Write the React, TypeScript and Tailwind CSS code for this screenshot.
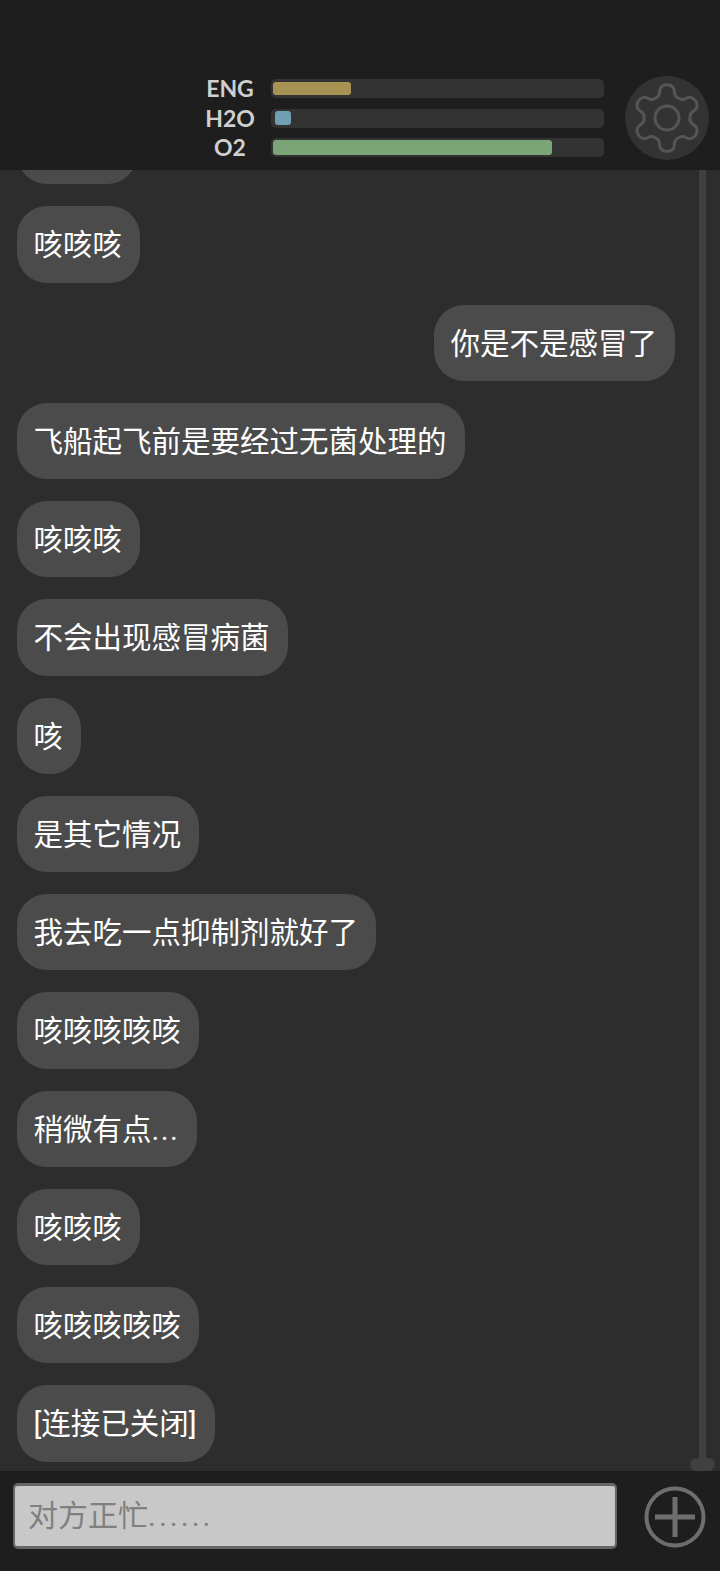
import React from 'react';

type Message = { text: string; dots?: boolean; mine?: boolean };

const messages: Message[] = [
  { text: '咳咳咳' },
  { text: '你是不是感冒了', mine: true },
  { text: '飞船起飞前是要经过无菌处理的' },
  { text: '咳咳咳' },
  { text: '不会出现感冒病菌' },
  { text: '咳' },
  { text: '是其它情况' },
  { text: '我去吃一点抑制剂就好了' },
  { text: '咳咳咳咳咳' },
  { text: '稍微有点', dots: true },
  { text: '咳咳咳' },
  { text: '咳咳咳咳咳' },
  { text: '[连接已关闭]' },
];

const stats = [
  { label: 'ENG', fill: 'w-[78px] ml-[1px] h-[13px] bg-[#a89253]' },
  { label: 'H2O', fill: 'w-[16px] ml-[3px] h-[14px] bg-[#6fa0b4]' },
  { label: 'O2', fill: 'w-[279px] ml-[1px] h-[15px] bg-[#7ba577]' },
];

function GearIcon() {
  return (
    <svg className="w-[80px] h-[80px]" viewBox="0 0 24 24" fill="none" stroke="#555555" strokeWidth={0.9} strokeLinejoin="round">
      <path d="M12.22 2h-.44a2 2 0 0 0-2 2v.18a2 2 0 0 1-1 1.73l-.43.25a2 2 0 0 1-2 0l-.15-.08a2 2 0 0 0-2.73.73l-.22.38a2 2 0 0 0 .73 2.73l.15.1a2 2 0 0 1 1 1.72v.51a2 2 0 0 1-1 1.74l-.15.09a2 2 0 0 0-.73 2.73l.22.38a2 2 0 0 0 2.73.73l.15-.08a2 2 0 0 1 2 0l.43.25a2 2 0 0 1 1 1.73V20a2 2 0 0 0 2 2h.44a2 2 0 0 0 2-2v-.18a2 2 0 0 1 1-1.73l.43-.25a2 2 0 0 1 2 0l.15.08a2 2 0 0 0 2.73-.73l.22-.39a2 2 0 0 0-.73-2.73l-.15-.08a2 2 0 0 1-1-1.74v-.5a2 2 0 0 1 1-1.74l.15-.09a2 2 0 0 0 .73-2.73l-.22-.38a2 2 0 0 0-2.73-.73l-.15.08a2 2 0 0 1-2 0l-.43-.25a2 2 0 0 1-1-1.73V4a2 2 0 0 0-2-2z" />
      <circle cx="12" cy="12" r="3.6" />
    </svg>
  );
}

function PlusIcon() {
  return (
    <svg className="w-[62px] h-[62px]" viewBox="0 0 62 62" fill="none" stroke="#6e6e6e">
      <circle cx="31" cy="31" r="28.5" strokeWidth={4} />
      <path d="M11 31h40M31 11v40" strokeWidth={5} />
    </svg>
  );
}

export default function App() {
  return (
    <div className="flex flex-col h-[1571px] w-[720px] bg-[#2d2d2d] overflow-hidden font-['Roboto','Noto_Sans_CJK_SC',sans-serif]">
      <header className="h-[170px] shrink-0 bg-[#1e1e1e] flex justify-end items-start pt-[76px] pr-[11px] z-10">
        <div className="flex flex-col gap-[10px] pt-[3px] mr-[21px]">
          {stats.map((s) => (
            <div key={s.label} className="flex items-center h-[19.5px]">
              <span className="w-[64px] mr-[9px] text-center text-[23px] leading-none font-bold text-[#cfcfcf] font-['Lato',sans-serif]">
                {s.label}
              </span>
              <div className="w-[333px] h-[19px] rounded-[5px] bg-[#333333] flex items-center px-[1px]">
                <div className={`rounded-[3px] ${s.fill}`} />
              </div>
            </div>
          ))}
        </div>
        <button className="w-[84px] h-[84px] rounded-full bg-[#333333] flex items-center justify-center">
          <GearIcon />
        </button>
      </header>

      <main className="flex-1 relative overflow-hidden">
        <div className="flex flex-col gap-[22px] mt-[-62px] pl-[17px] pr-[45px]">
          {/* top bubble is scrolled under the header, only its bottom edge shows */}
          <div className="w-[120px] h-[76.25px] rounded-[30px] bg-[#4b4b4b]" />
          {messages.map((m, i) => (
            <div key={i} className={`flex ${m.mine ? 'justify-end' : 'justify-start'}`}>
              <div className="h-[76.25px] pl-[16.5px] pr-[18px] rounded-[30px] bg-[#4b4b4b] text-white text-[29.5px] leading-[78px] whitespace-nowrap">
                {m.text}
                {m.dots && <span className="tracking-[1.5px]">...</span>}
              </div>
            </div>
          ))}
        </div>
        <div className="absolute top-0 right-[14px] w-[7px] h-[1292px] bg-[#404040]" />
        <div className="absolute bottom-0 right-[5px] w-[25px] h-[13px] rounded-full bg-[#404040]" />
      </main>

      <footer className="h-[100px] shrink-0 bg-[#1e1e1e] flex items-start pt-[12px] pl-[13px]">
        <div className="w-[604px] h-[66px] rounded-[5px] bg-[#c8c8c8] border-x-2 border-y-[3px] border-[#666666] flex items-center px-[13px]">
          <span className="text-[30px] leading-none text-[#808080]">
            对方正忙<span className="tracking-[3px]">......</span>
          </span>
        </div>
        <button className="ml-[27px] mt-[3px]">
          <PlusIcon />
        </button>
      </footer>
    </div>
  );
}
